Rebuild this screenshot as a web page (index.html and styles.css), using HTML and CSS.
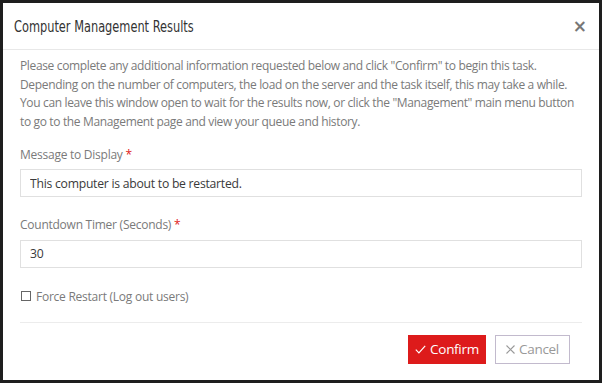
FILE: index.html
```html
<!DOCTYPE html>
<html lang="en">
<head>
    <meta charset="UTF-8">
    <meta name="viewport" content="width=device-width, initial-scale=1.0">
    <title>Computer Management Results</title>
    <link rel="stylesheet" href="styles.css">
</head>
<body>
    <div class="modal">
        <div class="modal-header">
            <h4 class="modal-title">Computer Management Results</h4>
            <button type="button" class="close">&times;</button>
        </div>

        <div class="modal-body">
            <p class="intro">Please complete any additional information requested below and click "Confirm" to begin this task.<br>
                Depending on the number of computers, the load on the server and the task itself, this may take a while.<br>
                You can leave this window open to wait for the results now, or click the "Management" main menu button<br>
                to go to the Management page and view your queue and history.</p>

            <div class="form-group">
                <label for="message">Message to Display <span class="req">*</span></label>
                <input type="text" id="message" class="form-control" value="This computer is about to be restarted.">
            </div>

            <div class="form-group">
                <label for="countdown">Countdown Timer (Seconds) <span class="req">*</span></label>
                <input type="text" id="countdown" class="form-control" value="30">
            </div>

            <label class="check-row">
                <input type="checkbox" class="check-box">
                <span>Force Restart (Log out users)</span>
            </label>
        </div>

        <div class="modal-footer">
            <button type="button" class="btn btn-confirm">
                <svg class="btn-icon" width="11" height="9" viewBox="0 0 11 9"><path d="M0.8 4.6 L3.9 7.8 L10.2 0.8" fill="none" stroke="currentColor" stroke-width="1.2"/></svg>
                Confirm
            </button>
            <button type="button" class="btn btn-cancel">
                <svg class="btn-icon" width="9" height="9" viewBox="0 0 9 9"><path d="M0.5 0.5 L8.5 8.5 M8.5 0.5 L0.5 8.5" fill="none" stroke="currentColor" stroke-width="1.1"/></svg>
                Cancel
            </button>
        </div>
    </div>
</body>
</html>
```

FILE: styles.css
```css
body {
    margin: 0;
    padding: 3px;
    background-color: #1e1e1e;
    font-family: 'Open Sans', 'Noto Sans', sans-serif;
}
.modal {
    background-color: #fff;
    width: 596px;
    height: 377px;
    box-sizing: border-box;
    display: flex;
    flex-direction: column;
}
.modal-header {
    height: 46px;
    display: flex;
    align-items: center;
    justify-content: space-between;
    padding: 0 11px;
    border-bottom: 1px solid #e8e8e8;
}
.modal-title {
    margin: 0;
    font-family: 'Liberation Sans Narrow', 'DejaVu Sans Condensed', sans-serif;
    font-weight: normal;
    font-size: 16px;
    color: #333;
    transform: scaleX(0.79);
    transform-origin: left center;
    white-space: nowrap;
}
.close {
    background: none;
    border: none;
    padding: 0;
    margin-right: 1px;
    font-family: 'DejaVu Sans', sans-serif;
    font-size: 17px;
    font-weight: bold;
    color: #777;
    cursor: pointer;
}
.modal-body {
    padding: 7px 17px 0;
    letter-spacing: -0.25px;
}
.intro {
    margin: 0;
    font-size: 12px;
    line-height: 18.67px;
    letter-spacing: -0.35px;
    white-space: nowrap;
    color: #7a7a7a;
}
.form-group {
    margin-top: 14px;
}
.form-group + .form-group {
    margin-top: 18.5px;
}
.form-group label {
    display: block;
    font-size: 12px;
    line-height: 18.67px;
    color: #7a7a7a;
    margin-bottom: 5px;
}
.req {
    color: #e02020;
}
.form-control {
    display: block;
    width: 100%;
    height: 28px;
    box-sizing: border-box;
    border: 1px solid #e0e0e0;
    padding: 0 9px;
    font-family: 'Open Sans', 'Noto Sans', sans-serif;
    font-size: 12.2px;
    letter-spacing: -0.25px;
    color: #3a3a3a;
    outline: none;
}
.check-row {
    display: flex;
    align-items: center;
    margin-top: 19.5px;
    height: 18.67px;
    font-size: 12px;
    color: #7a7a7a;
}
.check-box {
    appearance: none;
    width: 10px;
    height: 10px;
    margin: 0 5px 0 1px;
    border: 1px solid #666;
    background: #fff;
}
.modal-footer {
    margin: 16px 17px 0;
    border-top: 1px solid #ececec;
    padding: 12px 12px 0 0;
    display: flex;
    justify-content: flex-end;
    gap: 9px;
}
.btn {
    height: 29px;
    padding: 0;
    display: flex;
    align-items: center;
    justify-content: center;
    gap: 4px;
    font-family: 'Open Sans', 'Noto Sans', sans-serif;
    font-size: 13.5px;
    letter-spacing: -0.3px;
    white-space: nowrap;
    cursor: pointer;
}
.btn-confirm {
    width: 78px;
    background-color: #dd1b1b;
    border: 1px solid #dd1b1b;
    color: #fff;
}
.btn-cancel {
    width: 75px;
    background-color: #fff;
    border: 1px solid #c2bacd;
    color: #999;
}
.btn-icon {
    display: block;
}
```
